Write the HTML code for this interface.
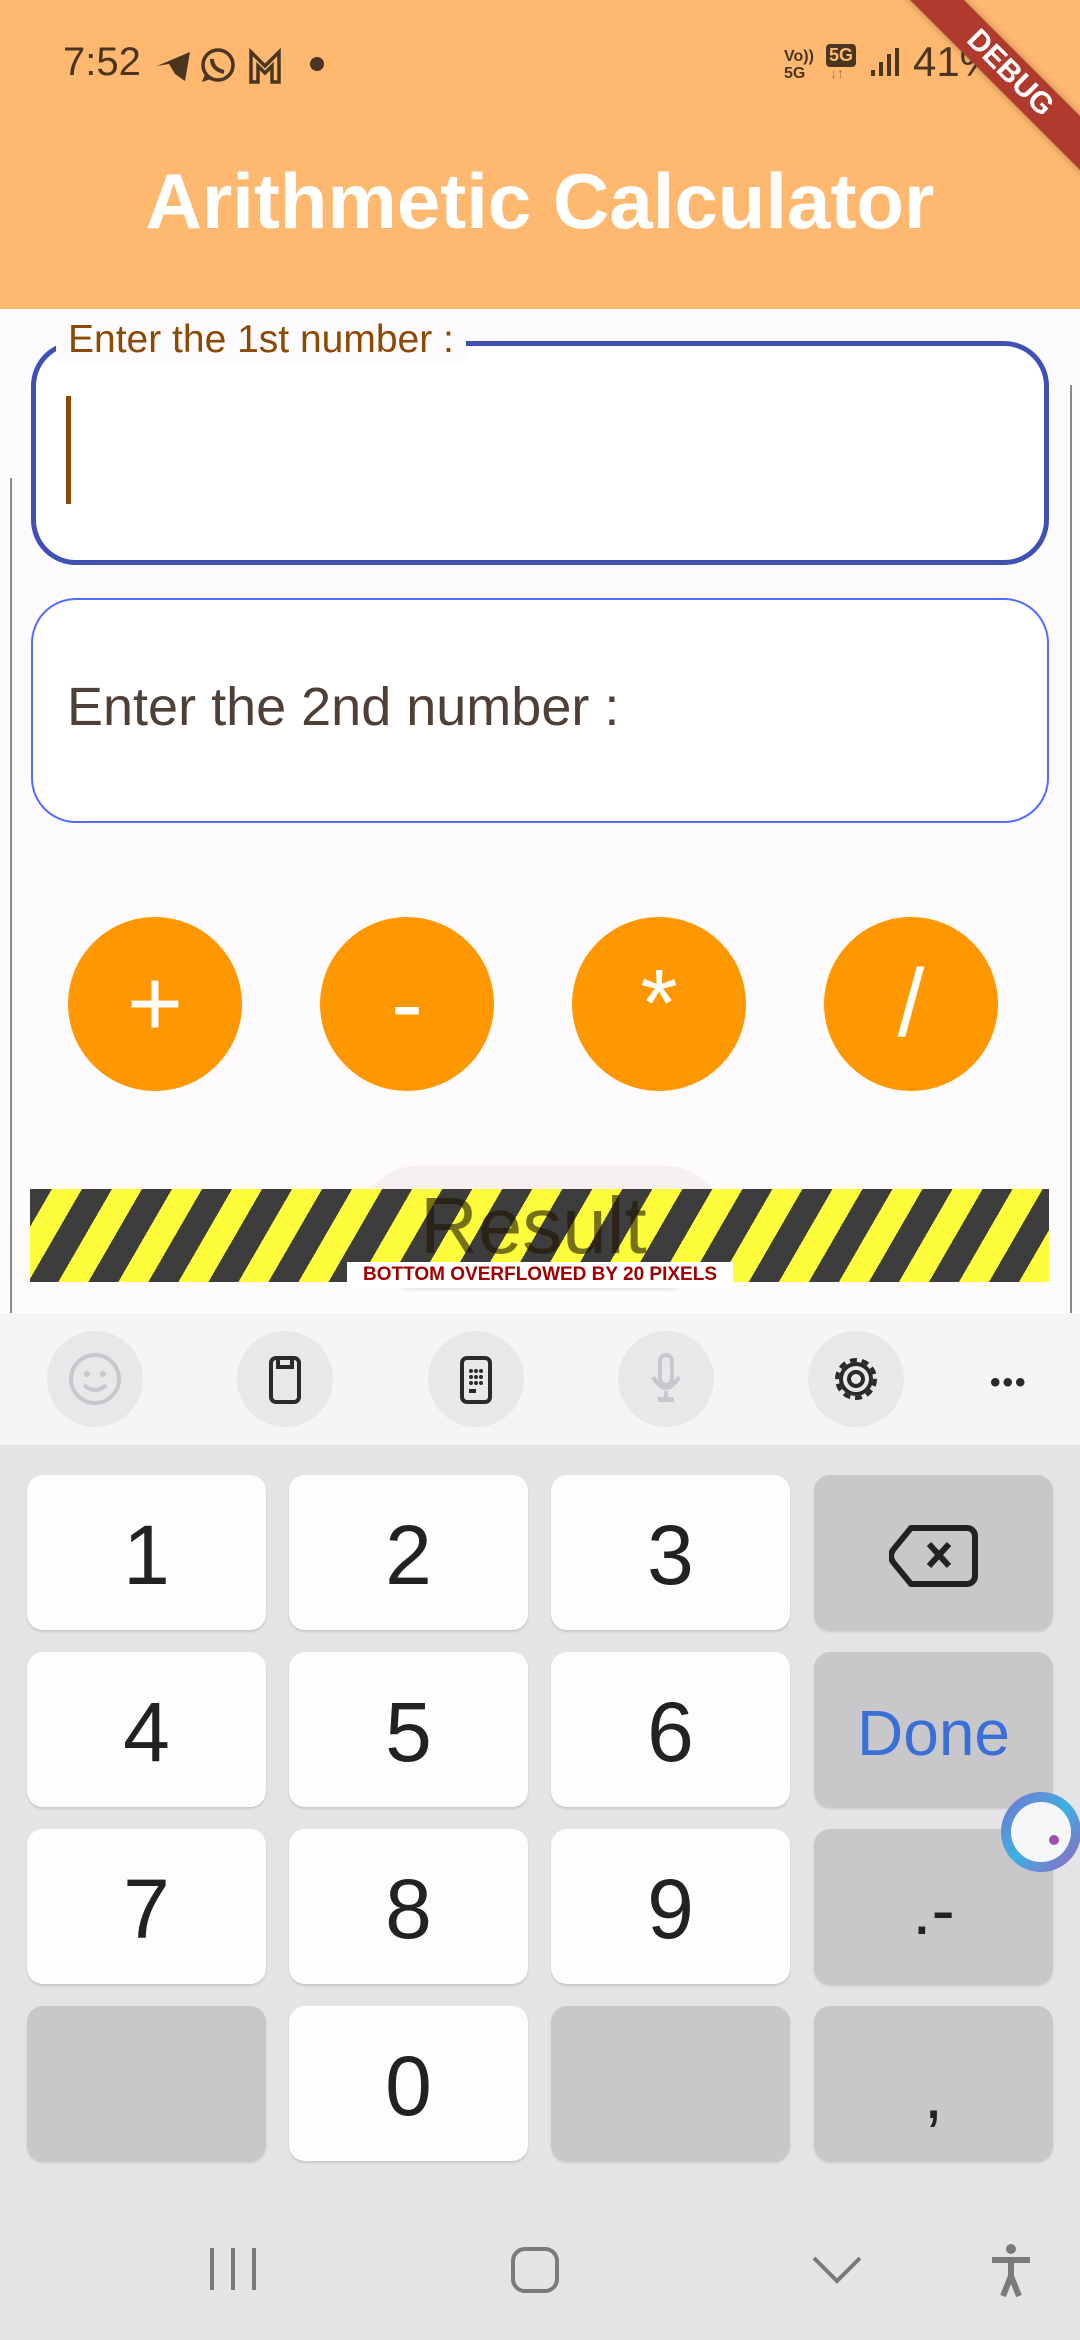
<!DOCTYPE html>
<html><head><meta charset="utf-8"><style>
*{margin:0;padding:0;box-sizing:border-box}
body{width:1080px;height:2340px;overflow:hidden;background:#fefbff;font-family:"Liberation Sans",sans-serif;position:relative}
.abs{position:absolute}
.hdr{left:0;top:0;width:1080px;height:309px;background:#ffb870}
.key{position:absolute;width:239px;height:155px;border-radius:16px;background:#fdfdfe;box-shadow:0 2px 2px rgba(0,0,0,.12);display:flex;align-items:center;justify-content:center;font-size:84px;color:#222;padding-top:6px}
.gk{background:#c8c8cb}
.circ{position:absolute;width:174px;height:174px;border-radius:50%;background:#ff9800;color:#fff;display:flex;align-items:center;justify-content:center;font-size:96px;top:917px}
.tb{position:absolute;top:1331px;width:96px;height:96px;border-radius:50%;background:#e8e8ea}
</style></head><body>
<div class="abs hdr"></div>
<div class="abs" style="left:63px;top:40px;font-size:40px;color:#4a3520">7:52</div>
<svg class="abs" style="left:155px;top:48px" width="135" height="36" viewBox="0 0 135 36">
<path d="M2 18 L35 4 L30 33 L20 26 L14 16 Z" fill="#4a3520"/>
<circle cx="63" cy="17" r="15" fill="none" stroke="#4a3520" stroke-width="3.5"/>
<path d="M50 26 L47 34 L56 31" fill="#4a3520"/>
<path d="M57 11 q0 10 12 13" stroke="#4a3520" stroke-width="4" fill="none"/>
<path d="M96 34 V4 L110 18 L124 4 V34 H117 V18 L110 25 L103 18 V34 Z" fill="none" stroke="#4a3520" stroke-width="3.5"/>
</svg>
<div class="abs" style="left:310px;top:57px;width:14px;height:14px;border-radius:50%;background:#4a3520"></div>
<div class="abs" style="left:784px;top:48px;font-size:16px;font-weight:bold;color:#4a3520;line-height:17px">Vo))<br>5G</div>
<div class="abs" style="left:826px;top:44px;background:#4a3520;color:#ffb870;font-size:18px;font-weight:bold;border-radius:4px;padding:1px 3px">5G</div>
<div class="abs" style="left:830px;top:65px;font-size:14px;color:#a07850">↓↑</div>
<svg class="abs" style="left:870px;top:48px" width="30" height="30"><rect x="1" y="22" width="4" height="6" fill="#4a3520"/><rect x="9" y="14" width="4" height="14" fill="#4a3520"/><rect x="17" y="6" width="4" height="22" fill="#4a3520"/><rect x="25" y="0" width="4" height="28" fill="#4a3520"/></svg>
<div class="abs" style="left:913px;top:38px;font-size:42px;color:#4a3520">41%</div>
<div class="abs" style="left:860px;top:54px;width:300px;height:38px;background:#b03a2e;transform:rotate(45deg);color:#fff;font-weight:bold;font-size:30px;text-align:center;line-height:38px;box-shadow:0 0 8px rgba(0,0,0,.3)">DEBUG</div>
<div class="abs" style="left:0;width:1080px;top:156px;text-align:center;font-size:78px;font-weight:bold;color:#fff">Arithmetic Calculator</div>

<div class="abs" style="left:10px;top:478px;width:2px;height:835px;background:#888"></div>
<div class="abs" style="left:1070px;top:385px;width:2px;height:928px;background:#888"></div>

<div class="abs" style="left:31px;top:341px;width:1018px;height:224px;border:5px solid #3f51b5;border-radius:45px;background:#fff"></div>
<div class="abs" style="left:56px;top:318px;padding:0 12px;background:#fefbff;font-size:39px;color:#8b4a00">Enter the 1st number :</div>
<div class="abs" style="left:66px;top:396px;width:5px;height:108px;background:#8b4a00"></div>

<div class="abs" style="left:31px;top:598px;width:1018px;height:225px;border:2px solid #536dfe;border-radius:45px;background:#fff"></div>
<div class="abs" style="left:67px;top:676px;font-size:54px;color:#4e4036">Enter the 2nd number :</div>

<div class="circ" style="left:68px">+</div>
<div class="circ" style="left:320px">-</div>
<div class="circ" style="left:572px">*</div>
<div class="circ" style="left:824px">/</div>

<div class="abs" style="left:358px;top:1166px;width:366px;height:120px;border-radius:60px;background:#f6f0f0;box-shadow:0 3px 4px rgba(0,0,0,.15)"></div>
<div class="abs" style="left:30px;top:1189px;width:1019px;height:93px;background:repeating-linear-gradient(-60deg,#fdfd3c 0 26px,#3d3d3d 26px 52px)"></div>
<div class="abs" style="left:420px;top:1180px;font-size:80px;color:#1e1400;opacity:.6">Result</div>
<div class="abs" style="left:347px;top:1262px;width:386px;height:26px;background:#fff;color:#a00000;font-weight:bold;font-size:19px;text-align:center;line-height:26px">BOTTOM OVERFLOWED BY 20 PIXELS</div>

<div class="abs" style="left:0;top:1313px;width:1080px;height:132px;background:#f5f5f7"></div>
<div class="tb" style="left:47px"></div><div class="tb" style="left:237px"></div><div class="tb" style="left:428px"></div><div class="tb" style="left:618px"></div><div class="tb" style="left:808px"></div>
<svg class="abs" style="left:47px;top:1331px" width="96" height="96"><circle cx="48" cy="48" r="24" fill="none" stroke="#c8c8cc" stroke-width="4"/><circle cx="40" cy="43" r="3" fill="#c8c8cc"/><circle cx="56" cy="43" r="3" fill="#c8c8cc"/><path d="M37 54 q11 10 22 0" stroke="#c8c8cc" stroke-width="4" fill="none"/></svg>
<svg class="abs" style="left:237px;top:1331px" width="96" height="96"><rect x="34" y="27" width="28" height="44" rx="5" fill="none" stroke="#2a2a2a" stroke-width="4"/><path d="M41 28 v8 h14 v-8" fill="none" stroke="#2a2a2a" stroke-width="4"/></svg>
<svg class="abs" style="left:428px;top:1331px" width="96" height="96"><rect x="34" y="27" width="28" height="44" rx="5" fill="none" stroke="#2a2a2a" stroke-width="4"/><g fill="#2a2a2a"><circle cx="43" cy="40" r="2"/><circle cx="48" cy="40" r="2"/><circle cx="53" cy="40" r="2"/><circle cx="43" cy="46" r="2"/><circle cx="48" cy="46" r="2"/><circle cx="53" cy="46" r="2"/><circle cx="43" cy="52" r="2"/><circle cx="48" cy="52" r="2"/><circle cx="53" cy="52" r="2"/><rect x="41" y="58" width="7" height="4"/></g></svg>
<svg class="abs" style="left:618px;top:1331px" width="96" height="96"><rect x="42" y="24" width="12" height="30" rx="6" fill="none" stroke="#c8c8cc" stroke-width="4"/><path d="M35 46 q13 22 26 0 M48 60 v6" stroke="#c8c8cc" stroke-width="4" fill="none"/><rect x="40" y="66" width="16" height="5" fill="#c8c8cc"/></svg>
<svg class="abs" style="left:808px;top:1331px" width="96" height="96"><circle cx="48" cy="48" r="7" fill="none" stroke="#2a2a2a" stroke-width="4"/><circle cx="48" cy="48" r="19" fill="none" stroke="#2a2a2a" stroke-width="4" stroke-dasharray="7 4.9"/><circle cx="48" cy="48" r="15" fill="none" stroke="#2a2a2a" stroke-width="4"/></svg>
<div class="abs" style="left:990px;top:1366px;font-size:30px;letter-spacing:2px;color:#2a2a2a;font-weight:bold">•••</div>

<div class="abs" style="left:0;top:1445px;width:1080px;height:895px;background:#e4e4e7"></div>
<div class="key" style="left:27px;top:1475px">1</div>
<div class="key" style="left:289px;top:1475px">2</div>
<div class="key" style="left:551px;top:1475px">3</div>
<div class="key gk" style="left:814px;top:1475px"><svg width="90" height="64"><path d="M22 4 H78 a8 8 0 0 1 8 8 V52 a8 8 0 0 1 -8 8 H22 L4 38 q-4 -6 0 -12 Z" fill="none" stroke="#222" stroke-width="6" stroke-linejoin="round"/><path d="M40 20 L60 42 M60 20 L40 42" stroke="#222" stroke-width="6"/></svg></div>
<div class="key" style="left:27px;top:1652px">4</div>
<div class="key" style="left:289px;top:1652px">5</div>
<div class="key" style="left:551px;top:1652px">6</div>
<div class="key gk" style="left:814px;top:1652px;color:#3a6fd8;font-size:64px">Done</div>
<div class="key" style="left:27px;top:1829px">7</div>
<div class="key" style="left:289px;top:1829px">8</div>
<div class="key" style="left:551px;top:1829px">9</div>
<div class="key gk" style="left:814px;top:1829px;font-size:70px">.-</div>
<div class="key gk" style="left:27px;top:2006px"></div>
<div class="key" style="left:289px;top:2006px">0</div>
<div class="key gk" style="left:551px;top:2006px"></div>
<div class="key gk" style="left:814px;top:2006px;font-size:70px;padding-top:20px">,</div>
<div class="abs" style="left:1001px;top:1792px;width:80px;height:80px;border-radius:50%;background:linear-gradient(135deg,#7a6fd0,#3cb0e0,#9a60c0);"></div>
<div class="abs" style="left:1011px;top:1802px;width:60px;height:60px;border-radius:50%;background:#f6f6f8"></div>
<div class="abs" style="left:1049px;top:1835px;width:10px;height:10px;border-radius:50%;background:#9a50b0"></div>

<svg class="abs" style="left:200px;top:2240px" width="880" height="70">
<g stroke="#7a7a7a" stroke-width="4" fill="none">
<path d="M12 8 V50 M33 8 V50 M54 8 V50"/>
<rect x="313" y="9" width="44" height="42" rx="12"/>
<path d="M614 18 L637 41 L660 18"/>
</g>
<circle cx="811" cy="9" r="5" fill="#7a7a7a"/>
<path d="M792 20 H830 M811 20 V36 M811 36 L803 56 M811 36 L819 56" stroke="#7a7a7a" stroke-width="6" fill="none"/>
</svg>
</body></html>
